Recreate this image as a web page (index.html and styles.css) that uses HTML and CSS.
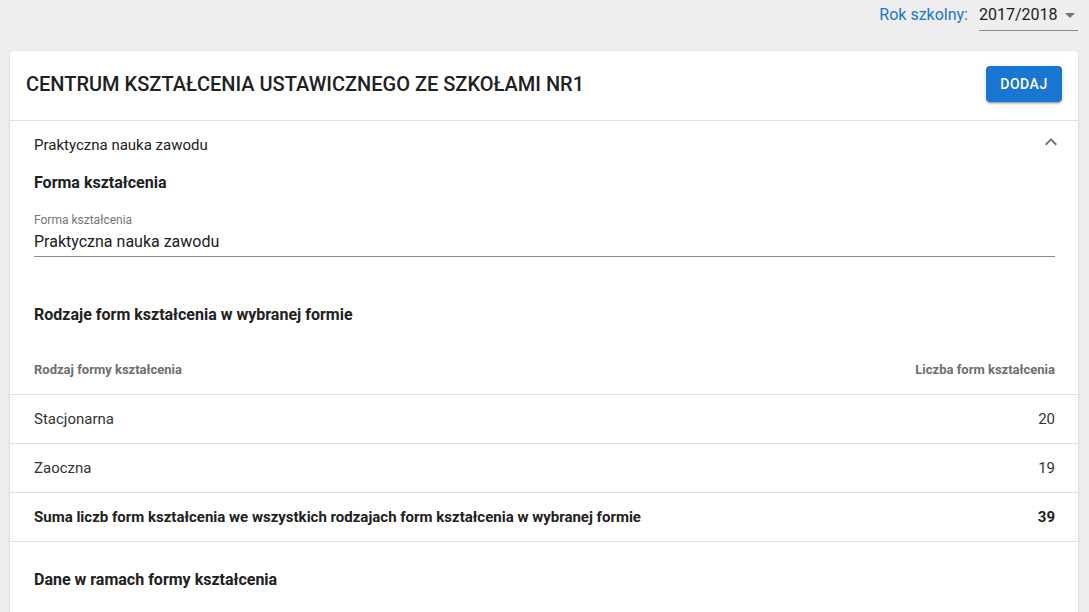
FILE: index.html
```html
<!DOCTYPE html>
<html lang="pl">

<head>
    <meta charset="UTF-8">
    <title>Formy kształcenia</title>
    <link rel="stylesheet" href="styles.css">
</head>

<body>
    <div class="topbar">
        <span class="year-label">Rok szkolny:</span>
        <div class="year-select">
            <span>2017/2018</span>
            <svg class="caret" width="24" height="24" viewBox="0 0 24 24"><path d="M7 10l5 5 5-5z" fill="#757575"/></svg>
        </div>
    </div>
    <div class="card">
        <div class="card-head">
            <h1 class="title">CENTRUM KSZTAŁCENIA USTAWICZNEGO ZE SZKOŁAMI NR1</h1>
            <button class="btn">Dodaj</button>
        </div>
        <div class="panel">
            <div class="panel-head">
                <span>Praktyczna nauka zawodu</span>
                <svg class="chevron" width="24" height="24" viewBox="0 0 24 24"><path d="M7.41 15.41L12 10.83l4.59 4.58L18 14l-6-6-6 6z" fill="#757575"/></svg>
            </div>
            <div class="panel-body">
                <h2 class="section section-first">Forma kształcenia</h2>
                <div class="field">
                    <label>Forma kształcenia</label>
                    <div class="field-value">Praktyczna nauka zawodu</div>
                </div>
                <h2 class="section section-gap">Rodzaje form kształcenia w wybranej formie</h2>
            </div>
            <table class="data">
                <thead>
                    <tr>
                        <th>Rodzaj formy kształcenia</th>
                        <th class="num">Liczba form kształcenia</th>
                    </tr>
                </thead>
                <tbody>
                    <tr>
                        <td>Stacjonarna</td>
                        <td class="num">20</td>
                    </tr>
                    <tr>
                        <td>Zaoczna</td>
                        <td class="num">19</td>
                    </tr>
                    <tr class="sum">
                        <td>Suma liczb form kształcenia we wszystkich rodzajach form kształcenia w wybranej formie</td>
                        <td class="num">39</td>
                    </tr>
                </tbody>
            </table>
            <div class="panel-body">
                <h2 class="section section-last">Dane w ramach formy kształcenia</h2>
            </div>
        </div>
    </div>
</body>

</html>
```
FILE: styles.css
```css
* {
    box-sizing: border-box;
}

body {
    margin: 0;
    background: #eeeeee;
    font-family: Roboto, "Liberation Sans", sans-serif;
    color: #212121;
    overflow: hidden;
}

.topbar {
    height: 51px;
    display: flex;
    justify-content: flex-end;
    align-items: flex-start;
    padding: 4px 11px 0 0;
}

.year-label {
    color: #1976d2;
    font-size: 16px;
    line-height: 22px;
    margin-right: 11px;
}

.year-select {
    display: flex;
    align-items: center;
    width: 99px;
    height: 27px;
    border-bottom: 1px solid #8a8a8a;
    font-size: 16px;
    line-height: 22px;
    padding-bottom: 4px;
}

.year-select span {
    flex: 1;
}

.caret {
    margin-right: -4px;
}

.card {
    margin: 0 11px 0 10px;
    background: #fff;
    border-radius: 4px 4px 0 0;
    box-shadow: 0 2px 1px -1px rgba(0, 0, 0, .2), 0 1px 1px 0 rgba(0, 0, 0, .14), 0 1px 3px 0 rgba(0, 0, 0, .12);
}

.card-head {
    display: flex;
    align-items: center;
    justify-content: space-between;
    height: 70px;
    padding: 0 16px 4px 16px;
    border-bottom: 1px solid #e0e0e0;
}

.title {
    margin: 0;
    font-size: 20px;
    font-weight: 500;
}

.btn {
    background: #1976d2;
    color: #fff;
    border: none;
    border-radius: 4px;
    height: 36px;
    width: 76px;
    font-family: inherit;
    font-size: 14px;
    font-weight: 500;
    text-transform: uppercase;
    letter-spacing: .5px;
    box-shadow: 0 3px 1px -2px rgba(0, 0, 0, .2), 0 2px 2px 0 rgba(0, 0, 0, .14), 0 1px 5px 0 rgba(0, 0, 0, .12);
}

.panel-head {
    display: flex;
    align-items: center;
    justify-content: space-between;
    height: 47px;
    padding: 0 15px 0 24px;
    font-size: 15px;
}

.chevron {
    margin-top: -6px;
}

.panel-body {
    padding: 0 23px 0 24px;
}

.section {
    margin: 0;
    font-size: 16px;
    font-weight: 700;
    line-height: 24px;
}

.section-first {
    padding-top: 3px;
}

.field {
    margin-top: 18px;
    border-bottom: 1px solid #8a8a8a;
}

.field label {
    display: block;
    font-size: 12px;
    line-height: 14px;
    color: #757575;
}

.field-value {
    font-size: 16px;
    line-height: 22px;
    padding: 4px 0 3px;
}

.section-gap {
    margin-top: 46px;
    margin-bottom: 18px;
}

.data {
    width: 100%;
    border-collapse: collapse;
}

.data th,
.data td {
    padding: 0 23px 0 24px;
    border-bottom: 1px solid #e0e0e0;
    text-align: left;
}

.data th {
    height: 49px;
    font-size: 13px;
    font-weight: 700;
    color: #6e6e6e;
}

.data td {
    height: 49px;
    font-size: 15px;
    color: #333;
}

.data .num {
    text-align: right;
}

.data .sum td {
    font-weight: 700;
    color: #212121;
}

.section-last {
    padding: 26px 0 40px;
}
```
